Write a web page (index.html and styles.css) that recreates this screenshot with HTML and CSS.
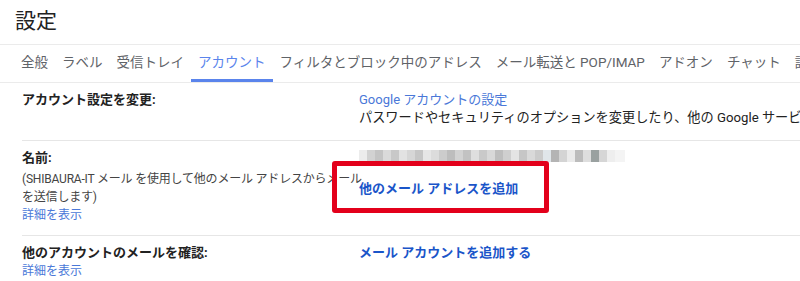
FILE: index.html
```html
<!DOCTYPE html>
<html lang="ja">

<head>
    <meta charset="UTF-8">
    <title>設定</title>
    <link rel="stylesheet" href="styles.css">
</head>

<body>
    <div class="title">設定</div>

    <div class="tabs">
        <div class="tab">全般</div>
        <div class="tab">ラベル</div>
        <div class="tab">受信トレイ</div>
        <div class="tab active">アカウント</div>
        <div class="tab">フィルタとブロック中のアドレス</div>
        <div class="tab">メール転送と POP/IMAP</div>
        <div class="tab">アドオン</div>
        <div class="tab">チャット</div>
        <div class="tab">詳細</div>
    </div>

    <div class="settings">
        <!-- アカウント設定 -->
        <div class="row">
            <div class="label">
                <div class="name">アカウント設定を変更:</div>
            </div>
            <div class="value">
                <a class="link">Google アカウントの設定</a>
                <div class="desc">パスワードやセキュリティのオプションを変更したり、他の Google サービスへのアクセスを確認したりできます。</div>
            </div>
        </div>

        <!-- 名前 -->
        <div class="row">
            <div class="label">
                <div class="name spaced">名前:</div>
                <div class="note">(SHIBAURA-IT メール を使用して他のメール アドレスからメール<br>を送信します)</div>
                <a class="link">詳細を表示</a>
            </div>
            <div class="value boxed">
                <div class="blurred"></div>
                <a class="link strong add">他のメール アドレスを追加</a>
                <div class="mark"></div>
            </div>
        </div>

        <!-- 他のアカウント -->
        <div class="row last">
            <div class="label">
                <div class="name">他のアカウントのメールを確認:</div>
                <a class="link">詳細を表示</a>
            </div>
            <div class="value">
                <a class="link strong">メール アカウントを追加する</a>
            </div>
        </div>
    </div>
</body>

</html>
```

FILE: styles.css
```css
body {
    margin: 0;
    background: #fff;
    color: #222;
    font-family: Roboto, "Noto Sans CJK JP", sans-serif;
    font-size: 13px;
    line-height: 18px;
    overflow: hidden;
    width: 800px;
}

.title {
    height: 44px;
    line-height: 42px;
    padding-left: 15px;
    font-size: 21px;
    color: #222;
    border-bottom: 1px solid #ebebeb;
}

.tabs {
    display: flex;
    padding-left: 14px;
    border-bottom: 1px solid #ebebeb;
    white-space: nowrap;
}

.tab {
    flex: none;
    height: 34px;
    line-height: 34px;
    padding: 0 7px;
    color: #5f6368;
    font-size: 13.5px;
    border-bottom: 3px solid transparent;
}

.tab.active {
    color: #5a84ec;
    border-bottom-color: #5a84ec;
}

.settings {
    padding-left: 22px;
}

.row {
    display: grid;
    grid-template-columns: 337px 1fr;
    padding: 8px 0 13px;
    border-bottom: 1px solid #e6e6e6;
    white-space: nowrap;
}

.row:nth-child(2) {
    padding-bottom: 11px;
}

.row.last {
    border-bottom: none;
}

.name {
    font-weight: bold;
    color: #222;
}

.name.spaced {
    margin-bottom: 3px;
}

.note {
    color: #444;
    font-size: 12px;
    letter-spacing: -0.2px;
}

.desc {
    font-size: 13.2px;
}

.link {
    display: block;
    color: #4a78d8;
    cursor: pointer;
}

.label .link {
    font-size: 12px;
}

.link.strong {
    font-weight: bold;
    color: #1a55c9;
}

.value {
    overflow: hidden;
}

.boxed {
    position: relative;
    overflow: visible;
}

.blurred {
    width: 266px;
    height: 12px;
    margin-top: 1px;
    background: linear-gradient(90deg,
            #ececec 0 8px, #d2d2d2 8px 16px, #c4c4c4 16px 24px, #dadada 24px 32px,
            #c8c8c8 32px 40px, #e2e2e2 40px 48px, #d6d6d6 48px 56px, #c6c6c6 56px 64px,
            #e6e6e6 64px 72px, #dcdcdc 72px 80px, #cccccc 80px 88px, #bdbdbd 88px 96px,
            #d2d2d2 96px 104px, #c2c2c2 104px 112px, #dedede 112px 120px, #c9c9c9 120px 128px,
            #d8d8d8 128px 136px, #bebebe 136px 144px, #cfcfcf 144px 152px, #e4e4e4 152px 160px,
            #c6c6c6 160px 168px, #d9d9d9 168px 176px, #cbcbcb 176px 184px, #e0e6ea 184px 192px,
            #b4b4b4 192px 200px, #d4d4d4 200px 208px, #eaeaea 208px 216px, #bcbcbc 216px 224px,
            #dedede 224px 232px, #9aa1a0 232px 240px, #d6d6d6 240px 248px, #eeeeee 248px 256px,
            #f4f4f4 256px 266px);
}

.add {
    margin-top: 18px;
}

.mark {
    position: absolute;
    left: -27px;
    top: 12px;
    width: 207px;
    height: 42px;
    border: 5px solid #e3001b;
    border-radius: 3px;
}
```
